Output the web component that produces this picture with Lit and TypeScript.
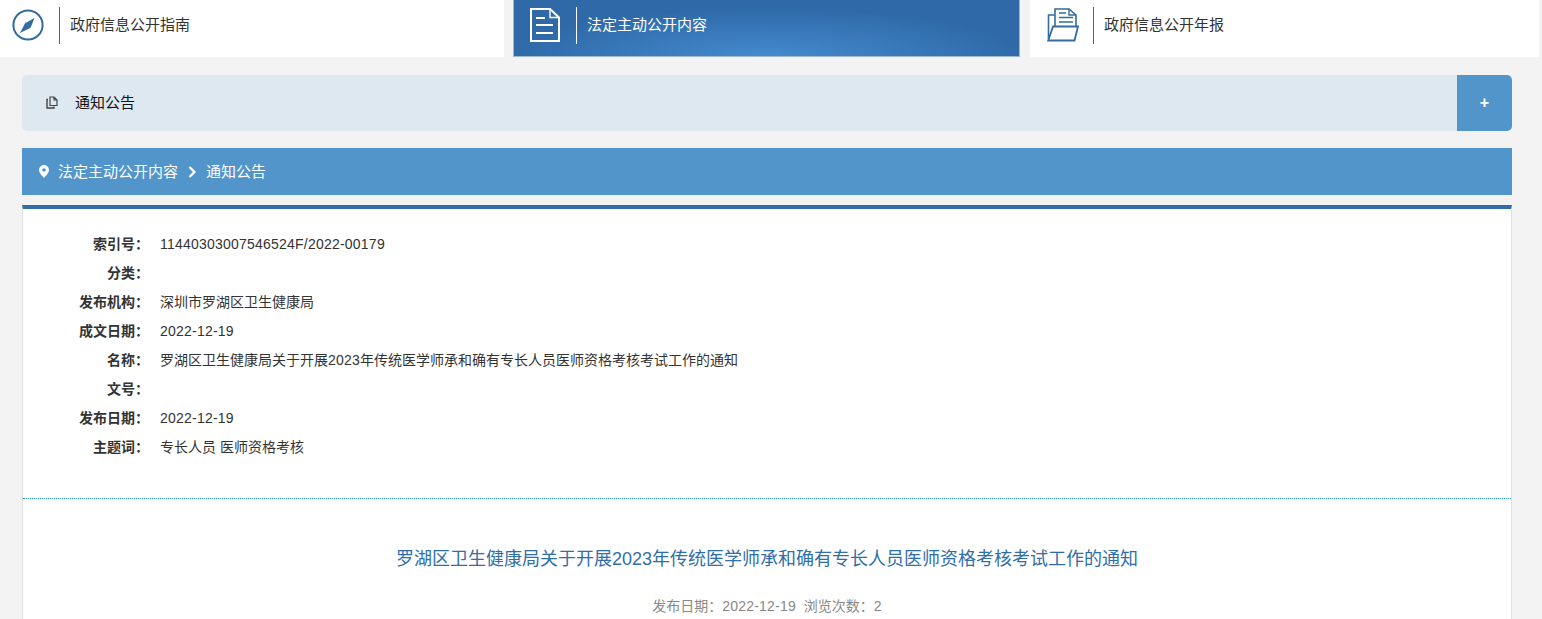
import { LitElement, html, css, svg } from "lit";
import { customElement } from "lit/decorators.js";

const compass = svg`<svg class="ico" width="32" height="32" viewBox="0 0 32 32"><circle cx="16" cy="16" r="14.600" fill="none" stroke="#336b9f" stroke-width="2"/><path d="M22.500 9 L18.500 19 L13.500 14 Z" fill="#336b9f"/><path d="M8 24 L13.500 13.500 L18.500 18.800 Z" fill="#336b9f"/></svg>`;
const doc = svg`<svg class="ico" width="30" height="34" viewBox="0 0 30 34"><path d="M1 1 H20 L29 9.500 V33 H1 Z" fill="none" stroke="#fff" stroke-width="2"/><path d="M20 1 V9.500 H29" fill="none" stroke="#fff" stroke-width="1.400"/><path d="M6 10 H15 M6 17 H23 M6 25 H23" stroke="#fff" stroke-width="2" fill="none"/></svg>`;
const folder = svg`<svg class="ico" width="32" height="34" viewBox="0 0 32 34"><path d="M8 18 V1 H22 L29 7 V18" fill="none" stroke="#336b9f" stroke-width="1.600"/><path d="M22 1 V7 H29" fill="none" stroke="#336b9f" stroke-width="1.400"/><path d="M12 5 H19 M12 9.500 H26 M12 14 H26" stroke="#336b9f" stroke-width="1.600" fill="none"/><path d="M8 7 H1.500 V31" fill="none" stroke="#336b9f" stroke-width="1.600"/><path d="M1.200 32.500 L6 18.500 H31 L27.500 32.500 Z" fill="#fff" stroke="#336b9f" stroke-width="1.800"/></svg>`;
const copy = svg`<svg width="12" height="13" viewBox="0 0 12 13"><path d="M4 1 H8 L11 4 V9.500 H4 Z M8 1 V4 H11" fill="none" stroke="#444" stroke-width="1.200"/><path d="M2 3.500 H1 V12 H8 V10.500" fill="none" stroke="#444" stroke-width="1.400"/></svg>`;
const pin = svg`<svg width="10" height="13" viewBox="0 0 10 13"><path fill-rule="evenodd" d="M5 0 A5 5 0 0 1 10 5 C10 8 6.500 11 5 13 C3.500 11 0 8 0 5 A5 5 0 0 1 5 0 Z M5 3.200 A1.800 1.800 0 1 0 5 6.800 A1.800 1.800 0 1 0 5 3.200 Z" fill="#fff"/></svg>`;
const chev = svg`<svg width="9" height="12" viewBox="0 0 9 12"><path d="M1.500 1 L6.500 6 L1.500 11" fill="none" stroke="#fff" stroke-width="2.200"/></svg>`;

const rows: [string, string][] = [
  ["索引号：", "11440303007546524F/2022-00179"],
  ["分类：", ""],
  ["发布机构：", "深圳市罗湖区卫生健康局"],
  ["成文日期：", "2022-12-19"],
  ["名称：", "罗湖区卫生健康局关于开展2023年传统医学师承和确有专长人员医师资格考核考试工作的通知"],
  ["文号：", ""],
  ["发布日期：", "2022-12-19"],
  ["主题词：", "专长人员 医师资格考核"],
];

const spaced = (s: string) =>
  s.split(/([0-9A-Za-z\/-]+)/).map((p, i) => (i % 2 ? html`<span class="lat">${p}</span>` : p));

@customElement("app-root")
export class AppRoot extends LitElement {
  static styles = css`
    :host { display: block; height: 619px; overflow: hidden; background: #f3f3f3; font-family: "Liberation Sans", "Noto Sans CJK SC", sans-serif; color: #333; font-size: 14px; }
    .nav { display: grid; grid-template-columns: 504px 507px 509px; column-gap: 9.500px; height: 57px; width: 1539px; }
    .tab { background: #fff; display: flex; align-items: center; height: 57px; box-sizing: border-box; padding-bottom: 7px; color: #333; font-size: 15px; }
    .tab .iconbox { display: flex; align-items: center; justify-content: center; }
    .tab .divider { width: 1px; height: 37px; background: #336b9f; margin-right: 10px; }
    .tab .txt { margin-bottom: 4px; }
    .t1 { padding-left: 12px; }
    .t1 .iconbox { width: 32px; margin-right: 15px; }
    .t2 { width: 507px; background: radial-gradient(ellipse 260px 50px at 50% 100%, #438bcf 0%, #2f69a7 100%); box-shadow: inset 1px 0 0 #9fb6cf, inset -1px 0 0 #9fb6cf, inset 0 -1px 0 #9fb6cf; color: #fff; padding-left: 17px; margin-left: -0.500px; }
    .t2 .iconbox { width: 30px; margin-right: 16px; }
    .t2 .divider { background: #fff; }
    .t3 { padding-left: 17px; }
    .t3 .iconbox { width: 32px; margin-right: 14px; }
    .main { padding: 18px 30px 0 22px; }
    .acc { display: flex; height: 56px; background: #dee8f1; border-radius: 5px; overflow: hidden; align-items: center; }
    .acc .cicon { width: 12px; margin: 0 17px 2px 24px; display: flex; }
    .acc .lab { flex: 1; color: #111; font-size: 15px; line-height: 55px; height: 56px; }
    .acc .plus { width: 55px; height: 56px; background: #5295cb; color: #fff; display: flex; align-items: center; justify-content: center; font-size: 16px; font-weight: bold; padding-bottom: 1px; box-sizing: border-box; }
    .crumb { margin-top: 17px; height: 47px; background: #5295cb; color: #fff; display: flex; align-items: center; font-size: 15px; padding-left: 17px; }
    .crumb svg { display: block; }
    .crumb .a { margin-left: 9px; margin-bottom: 2px; }
    .crumb .c { margin: 0 9px 0 10px; }
    .crumb .b { margin-bottom: 2px; }
    .panel { margin-top: 10px; background: #fff; border-top: 4px solid #2f6ea8; border-left: 1px solid #e0e0e0; border-right: 1px solid #e0e0e0; height: 500px; }
    .meta { padding: 20px 0 0 0; height: 269px; border-bottom: 1px dotted #2f95d8; box-sizing: content-box; }
    .row { display: flex; height: 29px; align-items: center; }
    .k { width: 126px; text-align: right; font-weight: bold; color: #333; font-size: 14px; line-height: 20px; }
    .v { margin-left: 11px; font-size: 14px; color: #333; line-height: 20px; }
    .lat { letter-spacing: 0.22px; }
    h1 { margin: 46px 0 0; font-weight: normal; text-align: center; font-size: 18px; color: #2f6ea8; line-height: 28px; }
    .info { margin-top: 23px; text-align: center; color: #888; font-size: 14px; line-height: 20px; }
  `;
  render() {
    return html`
      <div class="nav">
        <div class="tab t1"><span class="iconbox">${compass}</span><span class="divider"></span><span class="txt">政府信息公开指南</span></div>
        <div class="tab t2"><span class="iconbox">${doc}</span><span class="divider"></span><span class="txt">法定主动公开内容</span></div>
        <div class="tab t3"><span class="iconbox">${folder}</span><span class="divider"></span><span class="txt">政府信息公开年报</span></div>
      </div>
      <div class="main">
        <div class="acc"><span class="cicon">${copy}</span><span class="lab">通知公告</span><span class="plus">+</span></div>
        <div class="crumb">${pin}<span class="a">法定主动公开内容</span><span class="c">${chev}</span><span class="b">通知公告</span></div>
        <div class="panel">
          <div class="meta">
            ${rows.map(([k, v]) => html`<div class="row"><div class="k">${k}</div><div class="v">${spaced(v)}</div></div>`)}
          </div>
          <h1>罗湖区卫生健康局关于开展2023年传统医学师承和确有专长人员医师资格考核考试工作的通知</h1>
          <div class="info">发布日期：${spaced("2022-12-19")}&nbsp;&nbsp;浏览次数：<span class="lat">2</span></div>
        </div>
      </div>
    `;
  }
}
